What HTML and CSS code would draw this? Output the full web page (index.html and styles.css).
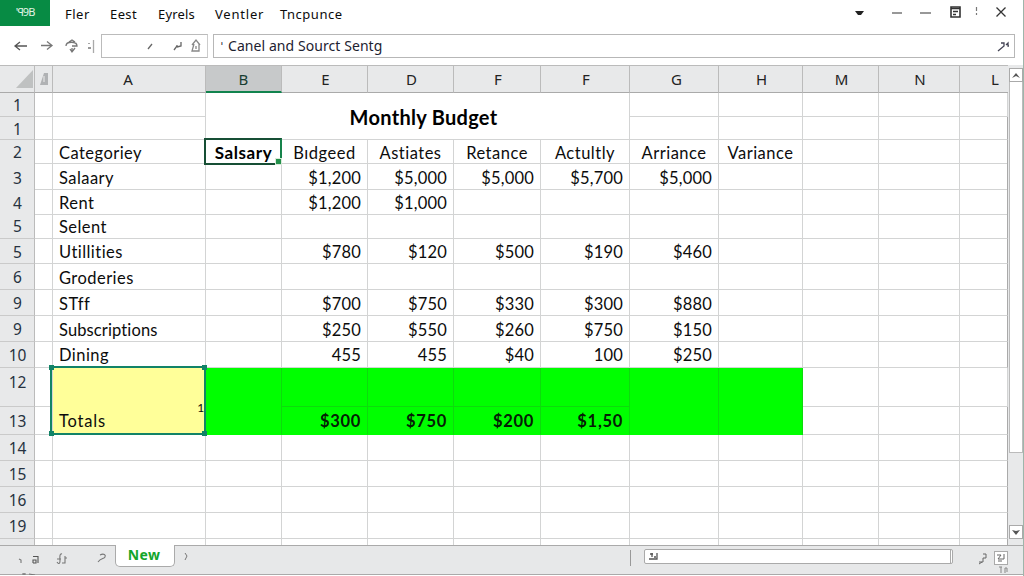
FILE: index.html
```html
<!DOCTYPE html>
<html lang="en">
<head>
<meta charset="utf-8">
<title>Monthly Budget</title>
<link rel="stylesheet" href="styles.css">
</head>
<body>
<div class="app">
  <header class="menubar">
    <div class="logo"><span>'ꟼ9B</span></div>
    <nav class="menu">
      <span class="m1">Fler</span><span class="m2">Eest</span><span class="m3">Eyrels</span><span class="m4">Ventler</span><span class="m5">Tncpunce</span>
    </nav>
    <svg class="window-icons" width="164" height="26" viewBox="0 0 164 26" fill="none" stroke="#333" stroke-width="1.2">
      <path d="M5 11h9l-3 4H8z" fill="#222" stroke="none"/>
      <path d="M42 13h10M70 13h11"/>
      <path d="M101 7h9v10h-9z" stroke-width="1.6"/><path d="M101 8.500h9M103 11.500h5M103 14.500h3" stroke-width="1.4"/>
      <path d="M126.500 7v4M126.500 13v2" stroke="#777"/>
      <path d="M146.500 7.500l9 9M155.500 7.500l-9 9" stroke-width="1.3"/>
    </svg>
  </header>
  <div class="formula-row">
    <svg class="nav-icons" width="101" height="26" viewBox="0 0 101 26" fill="none" stroke="#555" stroke-width="1.3">
      <path d="M27 12H15M20 8l-5 4 5 4"/>
      <path d="M41 11.500h11M47 7.500l5 4-5 4" stroke="#777"/>
      <path d="M66 12c0-5 11-5 11 0h-5M69 8l3-2 3 2M70 15l2 3 3-4M72 18v-4" stroke="#777"/>
      <path d="M89 9v1M88 14h3" stroke="#777"/><path d="M93.500 6v13" stroke="#aaa"/>
    </svg>
    <div class="namebox">
      <svg width="105" height="24" viewBox="0 0 105 24" fill="none" stroke="#666" stroke-width="1.3">
        <path d="M46 14l4-5"/><path d="M72 15l3-4v-1M75 12l4-1V7"/><path d="M90 10l4-5 4 5M92 9l-2 7h7V9M94 11v3" stroke="#888"/>
      </svg>
    </div>
    <div class="formula">
      <span class="tick">ˈ</span><span class="formula-text">Canel and Sourct Sentg</span>
      <svg width="18" height="20" viewBox="0 0 18 20" fill="none" stroke="#445" stroke-width="1.3"><path d="M3 15l6-5V7H6M11 9l2-2v3h1"/></svg>
    </div>
  </div>
  <main class="body">
    <div class="sheet">
      <div class="row heads"><b class="corner"><svg width="17" height="18"><path d="M0 18L17 0v18z" fill="#bfc1c1"/></svg></b><b class="sliver"><svg width="9" height="12"><path d="M0 12L2 6 4 0h4v12z" fill="#b0b2b4"/><path d="M4 3v6" stroke="#eee"/></svg></b><b class="first">A</b><b class="active">B</b><b>E</b><b>D</b><b>F</b><b>F</b><b class="wide">G</b><b>H</b><b>M</b><b>N</b><b class="last">L</b></div>
      <div class="row double title-rows">
        <b>1</b><i></i><i></i><h1>Monthly Budget</h1><i></i><i></i><i></i><i></i><i></i>
        <b>1</b><i></i><i></i><i></i><i></i><i></i><i></i><i></i>
      </div>
      <div class="row r23 labels"><b>2</b><i></i><i class="name">Categoriey</i><i class="picked"><span>Salsary</span></i><i>Bıdgeed</i><i>Astiates</i><i>Retance</i><i>Actultly</i><i>Arriance</i><i>Variance</i><i></i><i></i><i></i></div>
      <div class="row r25 low"><b>3</b><i></i><i class="name">Salaary</i><i></i><i>$1,200</i><i>$5,000</i><i>$5,000</i><i>$5,700</i><i>$5,000</i><i></i><i></i><i></i><i></i></div>
      <div class="row r25 low"><b>4</b><i></i><i class="name">Rent</i><i></i><i>$1,200</i><i>$1,000</i><i></i><i></i><i></i><i></i><i></i><i></i><i></i></div>
      <div class="row r26"><b>5</b><i></i><i class="name">Selent</i><i></i><i></i><i></i><i></i><i></i><i></i><i></i><i></i><i></i><i></i></div>
      <div class="row r25"><b>5</b><i></i><i class="name">Utillities</i><i></i><i>$780</i><i>$120</i><i>$500</i><i>$190</i><i>$460</i><i></i><i></i><i></i><i></i></div>
      <div class="row r26"><b>6</b><i></i><i class="name">Groderies</i><i></i><i></i><i></i><i></i><i></i><i></i><i></i><i></i><i></i><i></i></div>
      <div class="row r26"><b>9</b><i></i><i class="name">STff</i><i></i><i>$700</i><i>$750</i><i>$330</i><i>$300</i><i>$880</i><i></i><i></i><i></i><i></i></div>
      <div class="row r26"><b>9</b><i></i><i class="name long">Subscriptions</i><i></i><i>$250</i><i>$550</i><i>$260</i><i>$750</i><i>$150</i><i></i><i></i><i></i><i></i></div>
      <div class="row r26 high"><b>10</b><i></i><i class="name">Dining</i><i></i><i>455</i><i>455</i><i>$40</i><i>100</i><i>$250</i><i></i><i></i><i></i><i></i></div>
      <div class="row double total-rows">
        <b class="upper c1">12</b><i class="upper c2"></i><i class="totals">Totals<span class="one">1</span><span class="selection"><u></u><u></u><u></u><u></u></span></i><i class="green tall c4"></i><i class="green upper c5"></i><i class="green upper c6"></i><i class="green upper c7"></i><i class="green upper c8"></i><i class="green tall c9"></i><i class="green tall c10"></i><i class="upper c11"></i><i class="upper c12"></i><i class="upper c13"></i>
        <b class="lower c1">13</b><i class="lower c2"></i><i class="green lower c5">$300</i><i class="green lower c6">$750</i><i class="green lower c7">$200</i><i class="green lower c8">$1,50</i><i class="lower c11"></i><i class="lower c12"></i><i class="lower c13"></i>
      </div>
      <div class="row r26"><b>14</b><i></i><i></i><i></i><i></i><i></i><i></i><i></i><i></i><i></i><i></i><i></i><i></i></div>
      <div class="row r26"><b>15</b><i></i><i></i><i></i><i></i><i></i><i></i><i></i><i></i><i></i><i></i><i></i><i></i></div>
      <div class="row r26"><b>16</b><i></i><i></i><i></i><i></i><i></i><i></i><i></i><i></i><i></i><i></i><i></i><i></i></div>
      <div class="row r26"><b>19</b><i></i><i></i><i></i><i></i><i></i><i></i><i></i><i></i><i></i><i></i><i></i><i></i></div>
      <div class="row r6"><b></b><i></i><i></i><i></i><i></i><i></i><i></i><i></i><i></i><i></i><i></i><i></i><i></i></div>
    </div>
    <aside class="scroll">
      <span class="arrow"><svg width="8" height="5"><path d="M0 5l4-5 4 5-4-2z" fill="#555"/></svg></span>
      <span class="thumb"></span>
      <span class="arrow down"><svg width="8" height="5"><path d="M0 0l4 5 4-5-4 1z" fill="#555"/></svg></span>
    </aside>
  </main>
  <footer class="tabs">
    <svg class="tab-icons" width="115" height="29" viewBox="0 0 115 29" fill="none" stroke="#777" stroke-width="1.1">
      <path d="M19 13l2 1v3"/><path d="M33 10.500h5V17M33 17v-3h3v3h-3" stroke="#555"/><path d="M62 8c-3-1-2 5-2 7s-1 4-3 1M57 13h4M65 10v7h-3M65 12h2"/><path d="M100 9c4-2 6 0 5 2s-4 1-7 5"/><path d="M24 27v3M22 28h4M29 28l6 1"/>
    </svg>
    <div class="tab">New</div>
    <svg class="after" width="14" height="22" fill="none" stroke="#777"><path d="M10 7l2 3-2 4"/></svg>
    <span class="divider"></span>
    <div class="hscroll"><svg width="16" height="13" fill="none" stroke="#555" stroke-width="1.3"><path d="M4 9h8V3M7 3v4M5 4h3M9 7h2"/></svg><span></span></div>
    <svg class="corner-icons" width="50" height="29" viewBox="0 0 50 29" fill="none" stroke="#666">
      <path d="M6 16h4v-4h3V8h-3M9 16l-3 2"/><rect x="21.500" y="5.500" width="13" height="13" fill="#fff" stroke="#aaa"/><path d="M24 9h4l-3 4h6V8M25 15h4"/><path d="M26 21h3M28 21v6M32 22v5M32 22h2v4" stroke="#888"/>
    </svg>
  </footer>
</div>
</body>
</html>
```
FILE: styles.css
```css
* { box-sizing: border-box; }
body { margin: 0; background: #fff; font-family: "Noto Sans", sans-serif; color: #0c0c0c; }
svg { display: block; flex: none; }
.app { width: 1024px; height: 576px; overflow: hidden; display: flex; flex-direction: column; border-right: 1px solid #9eb5aa; }
.menubar { height: 27px; display: flex; align-items: flex-start; flex: none; }
.logo { width: 50px; height: 26px; background: #078b44; color: #e1f4e6; font-size: 11px; line-height: 24px; text-align: center; letter-spacing: -1px; }
.menu { width: 800px; display: flex; padding: 4px 0 0 15px; font-size: 13px; line-height: 20px; }
.m1 { width: 45px; letter-spacing: 0.500px; }
.m2 { width: 48px; letter-spacing: 0.400px; }
.m3 { width: 57px; letter-spacing: 0.150px; }
.m4 { width: 65px; letter-spacing: 0.800px; }
.m5 { letter-spacing: 0.500px; }
.formula-row { height: 38px; flex: none; display: flex; padding-top: 7px; }
.namebox { width: 107px; height: 24px; border: 1px solid #bbb; border-right-color: #ccc; margin-right: 5px; }
.formula { width: 802px; height: 24px; border: 1px solid #b7b7b7; display: flex; align-items: center; padding-right: 1px; font-size: 14px; line-height: 22px; color: #1d2230; }
.tick { width: 14px; padding-left: 7px; font-size: 11px; }
.formula-text { flex: 1; letter-spacing: 0.070px; }
.body { height: 480px; flex: none; display: flex; }
.sheet { width: 1008px; font-family: Lato, sans-serif; font-size: 16.500px; border-top: 1px solid #bbb; font-variant-ligatures: none; }
.row { display: grid; grid-template-columns: 35px 18px 153px 76px 86px 86px 87px 89px 89px 84px 76px 81px 48px; }
.row b { font-weight: 400; background: #e8e9ea; border-right: 1px solid #bbb; border-bottom: 1px solid #cacaca; text-align: center; color: #263240; font-family: "Noto Sans", sans-serif; font-size: 15.500px; display: flex; align-items: center; justify-content: center; padding: 1px 0 0 1px; }
.row i { font-style: normal; border-right: 1px solid #d3d4d4; border-bottom: 1px solid #d3d4d4; display: flex; align-items: center; justify-content: flex-end; padding: 2px 6px 0 0; white-space: nowrap; min-width: 0; line-height: 20px; letter-spacing: 0.200px; }
.row i:last-child { border-right-color: #aaa; }
.row .name { justify-content: flex-start; padding-left: 6px; letter-spacing: 0.450px; }
.row .long { letter-spacing: 0.120px; }
.row.low i, .row.low b { padding-top: 4px; }
.row.high i { padding-top: 0; }
.row.heads { height: 27px; }
.heads b { border-bottom-color: #aaa; color: #222; font-size: 15px; padding: 0 0 0 2px; }
.heads .first { padding: 0 2px 0 0; }
.heads .wide { padding-left: 5px; }
.heads .corner { padding: 0 1px 0 0; justify-content: flex-end; }
.heads .active { background: #c7c9ca; border-bottom: 2px solid #11834e; color: #173e32; padding: 0; }
.heads .last { padding-left: 22px; border-right: 0; }
.double { grid-template-rows: 24px 23px; }
.title-rows h1 { grid-column: 4 / 9; grid-row: 1 / 3; margin: 0; border-right: 1px solid #d3d4d4; border-bottom: 1px solid #d3d4d4; font-size: 20px; line-height: 48px; text-align: center; padding-left: 12px; letter-spacing: 0.280px; color: #000; }
.r23 { height: 23px; }
.r25 { height: 25px; }
.r26 { height: 26px; }
.r6 { height: 6px; }
.row.r6 i, .row.r6 b { border-bottom: 0; padding: 0; }
.labels i { justify-content: center; padding-right: 0; letter-spacing: 0.500px; }
.row .picked { position: relative; font-weight: 700; font-size: 17px; letter-spacing: 0.550px; color: #000; }
.picked::before { content: ""; position: absolute; inset: -2px -1px -2px -2px; border: 2px solid #174f35; border-right-color: #16834b; }
.picked::after { content: ""; position: absolute; right: -1px; bottom: -2px; width: 5px; height: 5px; background: #23904b; border: 1px solid #d8ead9; }
.row.total-rows { grid-template-rows: 39px 28px; }
.upper { grid-row: 1; }
.lower { grid-row: 2; }
.row .upper.c1 { padding-bottom: 12px; }
.c1 { grid-column: 1; }
.c2 { grid-column: 2; }
.c4 { grid-column: 4; }
.c5 { grid-column: 5; }
.c6 { grid-column: 6; }
.c7 { grid-column: 7; }
.c8 { grid-column: 8; }
.c9 { grid-column: 9; }
.c10 { grid-column: 10; }
.c11 { grid-column: 11; }
.c12 { grid-column: 12; }
.c13 { grid-column: 13; }
.row .totals { grid-column: 3; grid-row: 1 / 3; position: relative; background: #ffff99; align-items: flex-end; justify-content: flex-start; padding: 0 0 3px 6px; letter-spacing: 0.800px; }
.one { position: absolute; right: 0; top: 30px; font-size: 12px; }
.selection { position: absolute; inset: -2px -1px -1px -3px; border: 2px solid #128367; }
.selection u { position: absolute; width: 5px; height: 5px; background: #128367; }
.selection u:nth-child(1) { left: -3px; top: -3px; }
.selection u:nth-child(2) { right: -3px; top: -3px; }
.selection u:nth-child(3) { left: -3px; bottom: -3px; }
.selection u:nth-child(4) { right: -3px; bottom: -3px; }
.row .green { background: #00ff00; border-color: #0ddb0d; font-weight: 700; padding-top: 1px; letter-spacing: 0.700px; color: #052005; }
.row .tall { grid-row: 1 / 3; }
.row .green.tall, .row .green.lower { border-bottom-color: #00ff00; }
.scroll { width: 15px; height: 480px; padding-top: 3px; background: #e8e9ea; display: flex; flex-direction: column; align-items: center; }
.arrow { width: 14px; height: 14px; border: 1px solid #aaa; background: #fff; display: flex; align-items: center; justify-content: center; flex: none; }
.thumb { width: 14px; height: 371px; background: #fff; border: 1px solid #bbb; border-top: 0; flex: none; }
.down { margin-top: 72px; }
.tabs { height: 30px; flex: none; display: flex; background: #e7e8e9; border-top: 1px solid #aaa; border-bottom: 1px solid #aaa; }
.tab { width: 60px; height: 22px; margin-top: -1px; background: #fff; border: 1px solid #aaa; border-top: 0; border-radius: 0 0 5px 5px; color: #13a52b; font-size: 14px; font-weight: 700; line-height: 20px; text-align: center; padding-right: 2px; letter-spacing: 0.400px; }
.divider { width: 1px; height: 16px; background: #999; margin: 4px 13px 0 441px; }
.hscroll { width: 309px; height: 15px; margin-top: 3px; background: #fff; border: 1px solid #aaa; border-radius: 2px; display: flex; justify-content: space-between; }
.hscroll span { width: 2px; border-left: 1px solid #aaa; }
.corner-icons { margin-left: 20px; }
```
